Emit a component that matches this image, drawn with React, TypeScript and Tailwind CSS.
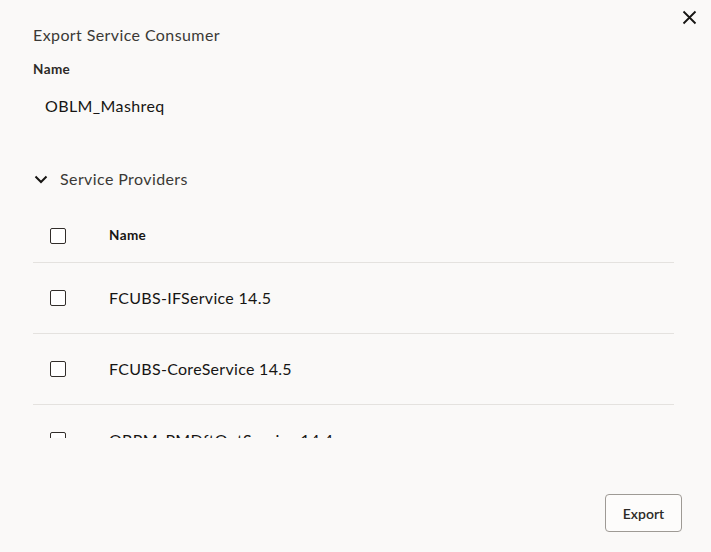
import React from "react";

const providers = [
  "FCUBS-IFService 14.5",
  "FCUBS-CoreService 14.5",
  "OBPM_PMDftOutService 14.4",
  "OBPM_PMService 14.4",
];

function Checkbox() {
  return (
    <span className="block h-[16px] w-[16px] rounded-[2px] border border-[#312d2a] bg-white" />
  );
}

export default function App() {
  return (
    <div className="relative flex h-[552px] w-[711px] flex-col bg-[#faf9f8] font-['Lato',sans-serif] text-[#161513]">
      <button className="absolute right-[14px] top-[10px] flex h-[15px] w-[15px] items-center justify-center">
        <svg width="15" height="15" viewBox="0 0 15 15" fill="none">
          <path d="M1.5 1.5L13.5 13.5M13.5 1.5L1.5 13.5" stroke="#161513" strokeWidth="1.8" />
        </svg>
      </button>

      <div className="px-[33px] pt-[23px]">
        <h2 className="text-[16px] leading-6 tracking-[0.4px] text-[#3b3936]">Export Service Consumer</h2>
        <div className="mt-[14px] text-[13.5px] font-bold leading-4 tracking-[0.4px] text-[#2c2a27]">Name</div>
        <div className="mt-[17px] pl-[12px] text-[16px] leading-6 tracking-[0.4px]">OBLM_Mashreq</div>

        <div className="mt-[49px] flex items-center gap-[12px]">
          <svg width="14" height="9" viewBox="0 0 14 9" fill="none" className="ml-[1px]">
            <path d="M1.5 1.5L7 7L12.5 1.5" stroke="#161513" strokeWidth="2" />
          </svg>
          <span className="text-[16px] leading-6 tracking-[0.4px] text-[#3b3936]">Service Providers</span>
        </div>
      </div>

      <div className="mx-[33px] mr-[37px] mt-[18px] h-[229px] overflow-hidden">
        <div className="flex h-[54px] items-center border-b border-[#e4e2df]">
          <div className="w-[76px] pl-[17px]">
            <Checkbox />
          </div>
          <span className="text-[13.5px] font-bold tracking-[0.4px]">Name</span>
        </div>
        {providers.map((p) => (
          <div key={p} className="flex h-[71px] items-center border-b border-[#e4e2df]">
            <div className="w-[76px] pl-[17px]">
              <Checkbox />
            </div>
            <span className="text-[16px] tracking-[0.3px]">{p}</span>
          </div>
        ))}
      </div>

      <div className="mt-auto flex justify-end pb-[20px] pr-[29px]">
        <button className="h-[38px] w-[77px] rounded-[4px] border border-[#9e9a95] bg-[#fdfcfb] text-[14px] font-semibold text-[#2c2a27]">
          Export
        </button>
      </div>
    </div>
  );
}
